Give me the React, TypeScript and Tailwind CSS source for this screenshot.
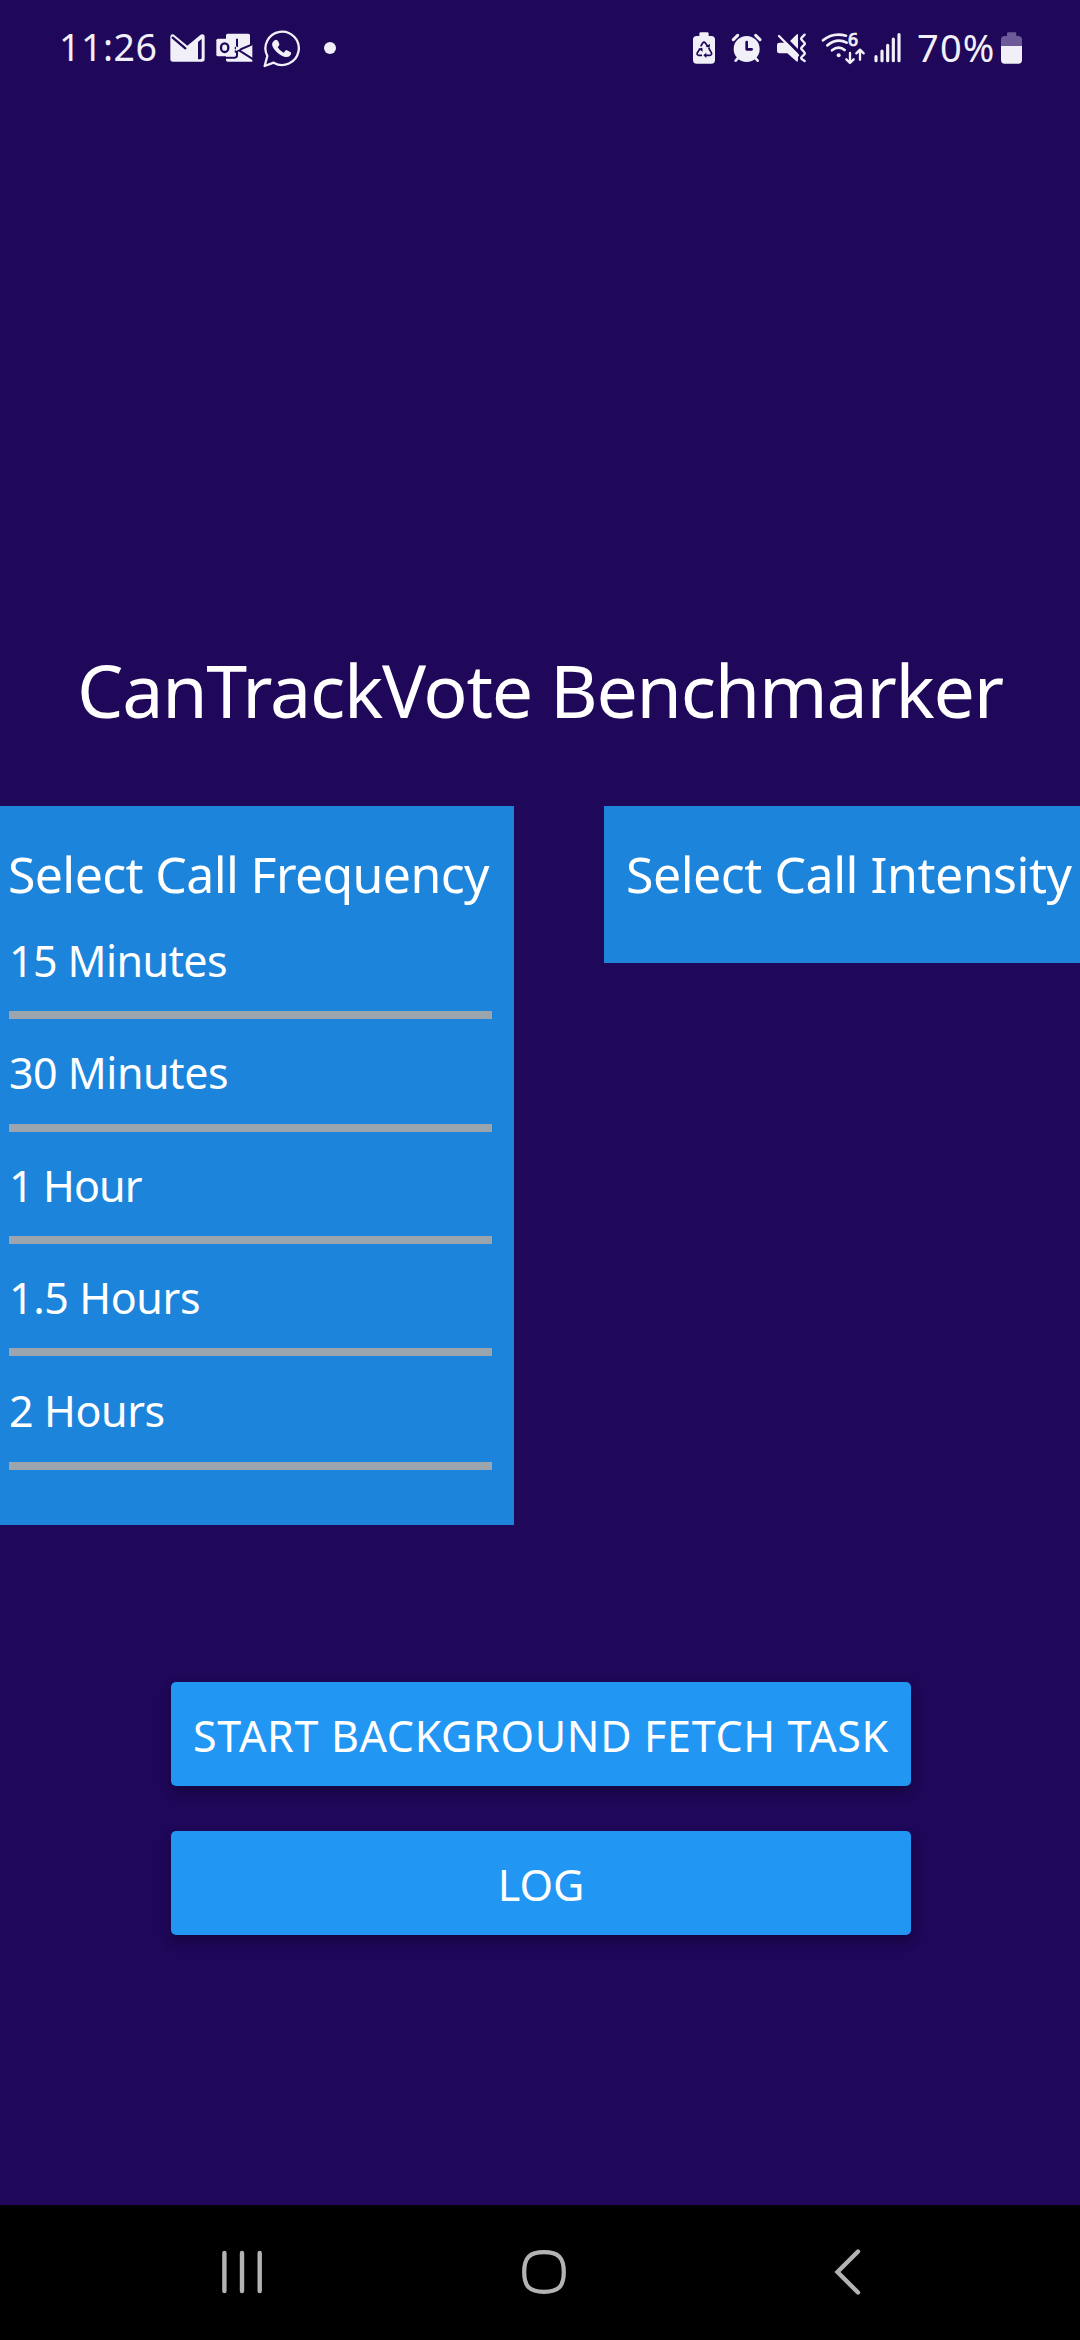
const ROWS = [
  { label: "15 Minutes", size: "h-[89px]", tracking: "tracking-[-0.6px]" },
  { label: "30 Minutes", size: "mt-[23px] h-[90px]", tracking: "tracking-[-0.5px]" },
  { label: "1 Hour", size: "mt-[23px] h-[89px]", tracking: "tracking-[-0.9px]" },
  { label: "1.5 Hours", size: "mt-[23px] h-[89px]", tracking: "tracking-[-0.4px]" },
  { label: "2 Hours", size: "mt-6 h-[90px]", tracking: "tracking-[-0.4px]" },
];

function MailIcon() {
  return (
    <svg className="ml-[14px] h-[38px] w-[36px]" viewBox="390 60 108 114" fill="none">
      <path d="M391 80q0-7 7-7 3 0 6 3l38 31 38-31q3-3 7-3 7 0 7 8v66q0 8-8 8h-87q-8 0-8-8z" fill="#f1eff8" />
      <path d="M398 83l38 32" stroke="#1f0759" strokeWidth="7" strokeLinecap="round" />
      <path d="M474 96l11-9v56q0 5-5 5h-6z" fill="#1f0759" />
    </svg>
  );
}

function OutlookIcon() {
  return (
    <svg className="ml-[10px] h-[38px] w-[37px]" viewBox="528 60 111 114" fill="none">
      <path d="M558 76q0-5 5-5h62q5 0 5 5v31l7-3v51h-74q-5 0-5-5z" fill="#f1eff8" />
      <path d="M583 112l57 36M583 126l52-22" stroke="#1f0759" strokeWidth="6" />
      <path d="M548 143h36q7 0 7-7V86" stroke="#1f0759" strokeWidth="6" />
      <path d="M602 116l-14-7v14z" fill="#f1eff8" />
      <rect x="529" y="86" width="55" height="53" rx="5" fill="#f1eff8" />
      <ellipse cx="554" cy="113" rx="11" ry="13" stroke="#1f0759" strokeWidth="7" />
    </svg>
  );
}

function ChatIcon() {
  return (
    <svg className="ml-[10px] h-[38px] w-[37px]" viewBox="669 60 111 114" fill="none">
      <path d="M674 168l8-30a50 50 0 1 1 19 20z" stroke="#f1eff8" strokeWidth="7" strokeLinejoin="round" />
      <path d="M704 91q4-3 8 0 3 2 6 11 1 3-2 6l-3 4q6 11 18 16l5-6q2-3 5-1l11 6q2 1 1 5-3 9-13 9-10 0-24-10-15-12-19-23-3-10 7-17z" fill="#f1eff8" />
    </svg>
  );
}

function BatterySaverIcon() {
  return (
    <svg className="h-[38px] w-[22px]" viewBox="69 60 66 114" fill="none">
      <path d="M88 78v-7q0-4 4-4h20q4 0 4 4v7h8q11 0 11 11v61q0 11-11 11H80q-11 0-11-11V89q0-11 11-11z" fill="#f1eff8" />
      <g stroke="#1f0759" strokeWidth="5" strokeLinejoin="round">
        <path d="M92 109l6-10q4-5 8 0l7 10" />
        <path d="M90 116l-8 12q-3 7 4 8h10" />
        <path d="M116 114l8 14q3 7-4 8h-14" />
      </g>
      <path d="M85 116l12-3 1 12zM109 128v16l-9-8zM107 110l12 3 1-12z" fill="#1f0759" />
    </svg>
  );
}

function AlarmIcon() {
  return (
    <svg className="ml-[16px] h-[38px] w-[31px]" viewBox="183 60 93 114" fill="none">
      <circle cx="230" cy="117" r="39" fill="#f1eff8" />
      <path d="M190 89l13-13M270 89l-13-13" stroke="#f1eff8" strokeWidth="9" strokeLinecap="round" />
      <path d="M197 152l9-10M263 152l-9-10" stroke="#f1eff8" strokeWidth="8" strokeLinecap="round" />
      <path d="M230 96v22h15" stroke="#1f0759" strokeWidth="8" strokeLinecap="round" strokeLinejoin="round" />
    </svg>
  );
}

function VibrateIcon() {
  return (
    <svg className="ml-[14px] h-[38px] w-[32px]" viewBox="318 60 96 114" fill="none">
      <path d="M384 73v78q0 6-5 3l-27-24h-24q-7 0-7-7v-18q0-7 7-7h27l24-24q5-4 5-1z" fill="#f1eff8" />
      <path d="M332 72l56 56" stroke="#1f0759" strokeWidth="10" />
      <path d="M327 78l57 58" stroke="#f1eff8" strokeWidth="7" strokeLinecap="round" />
      <path d="M404 74l-9 9q-3 3 0 6l8 9q3 3 0 6l-8 8q-3 3 0 6l8 9q3 3 0 6l-8 8q-3 3 0 6l9 6" stroke="#f1eff8" strokeWidth="7" strokeLinecap="round" strokeLinejoin="round" />
    </svg>
  );
}

function WifiIcon() {
  return (
    <svg className="ml-[13px] h-[38px] w-[46px] overflow-visible" viewBox="453 60 138 114" fill="none">
      <g stroke="#f1eff8" strokeWidth="8" strokeLinecap="round">
        <path d="M459 91q30-25 69-14" />
        <path d="M472 106q29-23 58-8" />
        <path d="M486 121q20-16 38-1" />
      </g>
      <circle cx="506" cy="136" r="6" fill="#f1eff8" />
      <text x="534" y="108" fill="#f1eff8" stroke="#f1eff8" strokeWidth="2" fontSize="53" fontFamily="Noto Sans" fontWeight="500">6</text>
      <path d="M540 129v28M529 148l11 11 11-11M570 149v-28M559 130l11-11 11 11" stroke="#f1eff8" strokeWidth="7" strokeLinecap="round" strokeLinejoin="round" />
    </svg>
  );
}

function SignalIcon() {
  return (
    <svg className="ml-[6px] h-[38px] w-[29px]" viewBox="612 60 87 114" fill="none">
      <path d="M621 152v-12M639 152v-29M656 152v-46M673 152v-65M690 152V74" stroke="#f1eff8" strokeWidth="9.5" strokeLinecap="round" />
    </svg>
  );
}

function BatteryIcon() {
  return (
    <svg className="ml-auto h-[38px] w-[22px]" viewBox="993 60 66 114" fill="none">
      <path d="M1011 78v-7q0-4 4-4h20q4 0 4 4v7h5q12 0 12 11v19h-63V89q0-11 12-11z" fill="#6d5b99" />
      <path d="M993 108h63v42q0 11-11 11h-41q-11 0-11-11z" fill="#f1eff8" />
    </svg>
  );
}

function StatusBar() {
  return (
    <header className="flex h-[96px] pt-[30px] text-[37.5px] leading-[38px] text-[#f1eff8]">
      <div className="flex w-[692px] pl-[59px]">
        <span className="w-[97px] -translate-y-[2px] tracking-[0.5px]">11:26</span>
        <MailIcon />
        <OutlookIcon />
        <ChatIcon />
        <span className="mt-3 ml-[24px] size-3 rounded-full bg-[#f1eff8]" />
      </div>
      <div className="flex w-[331px] pl-px">
        <BatterySaverIcon />
        <AlarmIcon />
        <VibrateIcon />
        <WifiIcon />
        <SignalIcon />
        <span className="ml-[15px] -translate-y-[2px] text-[38px] tracking-[1.2px]">70%</span>
        <BatteryIcon />
      </div>
    </header>
  );
}

function NavBar() {
  return (
    <nav className="flex h-[135px] items-center bg-black pb-0.5 pl-[219px]">
      <svg className="size-[48px]" viewBox="0 0 48 48" stroke="#b3b3b3" strokeWidth="4.4" strokeLinecap="round">
        <path d="M5.4 5v38M23 5v38M40.7 5v38" />
      </svg>
      <svg className="ml-[253px] size-[48px]" viewBox="0 0 48 48" fill="none" stroke="#b3b3b3" strokeWidth="4.2">
        <path d="M24 4.200c14.500 0 19.800 5.300 19.800 19.800S38.500 43.800 24 43.800 4.200 38.500 4.200 24 9.500 4.200 24 4.200z" />
      </svg>
      <svg className="ml-[251px] size-[48px]" viewBox="0 0 48 48" fill="none" stroke="#b3b3b3" strokeWidth="4.4" strokeLinecap="round">
        <path d="M39 3.500L18.500 24 39 44.500" />
      </svg>
    </nav>
  );
}

export default function App() {
  return (
    <div className="flex h-[2340px] w-[1080px] flex-col overflow-hidden bg-[#1f0759] font-['Noto_Sans',sans-serif] whitespace-nowrap text-white">
      <StatusBar />
      <main className="flex flex-1 flex-col pt-[544px]">
        <h1 className="pl-[77px] text-[73.5px] leading-[100px] tracking-[-1.25px]">CanTrackVote Benchmarker</h1>

        <div className="mt-[66px] flex items-start gap-[90px]">
          <section className="h-[719px] w-[514px] shrink-0 bg-[#1c84db] pt-[34px] pr-[22px] pl-[9px]">
            <h2 className="-ml-px h-[90px] text-[50px] leading-[68px] tracking-[-0.64px]">Select Call Frequency</h2>
            <ul>
              {ROWS.map((row) => (
                <li key={row.label} className={`border-b-8 border-[#9ba5ad] text-[43px] leading-[62px] ${row.size} ${row.tracking}`}>
                  {row.label}
                </li>
              ))}
            </ul>
          </section>
          <section className="h-[157px] flex-1 bg-[#1c84db] pt-[34px] pl-[22px]">
            <h2 className="text-[50px] leading-[68px] tracking-[-0.48px]">Select Call Intensity</h2>
          </section>
        </div>

        <div className="ml-[171px] mt-[157px] flex w-[740px] flex-col gap-[45px] text-[43px] leading-[104px]">
          <button className="h-[104px] rounded-[5px] bg-[#2196f3] pt-0.5 tracking-[0.67px] shadow-[0_6px_12px_rgba(0,0,0,0.3)]">
            START BACKGROUND FETCH TASK
          </button>
          <button className="h-[104px] rounded-[5px] bg-[#2196f3] pt-0.5 shadow-[0_6px_12px_rgba(0,0,0,0.3)]">LOG</button>
        </div>
      </main>
      <NavBar />
    </div>
  );
}
